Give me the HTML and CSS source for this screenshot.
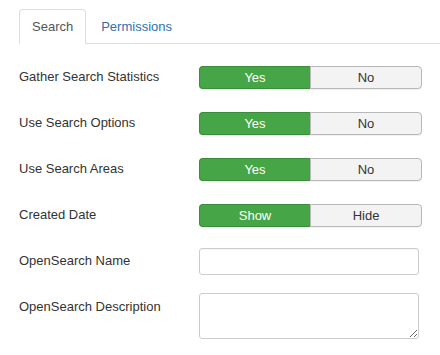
FILE: index.html
```html
<!DOCTYPE html>
<html>
<head>
<meta charset="utf-8">
<link rel="stylesheet" href="styles.css">
</head>
<body>
<div class="page">
  <ul class="tabs">
    <li class="tab active"><a>Search</a></li>
    <li class="tab"><a>Permissions</a></li>
  </ul>
  <div class="form">
    <div class="row">
      <label class="label">Gather Search Statistics</label>
      <div class="toggle"><span class="opt on">Yes</span><span class="opt">No</span></div>
    </div>
    <div class="row">
      <label class="label">Use Search Options</label>
      <div class="toggle"><span class="opt on">Yes</span><span class="opt">No</span></div>
    </div>
    <div class="row">
      <label class="label">Use Search Areas</label>
      <div class="toggle"><span class="opt on">Yes</span><span class="opt">No</span></div>
    </div>
    <div class="row">
      <label class="label">Created Date</label>
      <div class="toggle"><span class="opt on">Show</span><span class="opt">Hide</span></div>
    </div>
    <div class="row">
      <label class="label">OpenSearch Name</label>
      <input class="input" type="text">
    </div>
    <div class="row top">
      <label class="label">OpenSearch Description</label>
      <textarea class="textarea"></textarea>
    </div>
  </div>
</div>
</body>
</html>
```

FILE: styles.css
```css
html, body {
  margin: 0;
  padding: 0;
  background: #fff;
}
body {
  font-family: "Liberation Sans", Arial, sans-serif;
  font-size: 13px;
  color: #333;
}
.page {
  padding-left: 19px;
}
.tabs {
  list-style: none;
  margin: 9px 0 0 0;
  padding: 0;
  display: flex;
  gap: 2px;
  border-bottom: 1px solid #ddd;
}
.tab {
  margin-bottom: -1px;
}
.tab a {
  display: block;
  padding: 8px 12px;
  line-height: 17px;
  border: 1px solid transparent;
  border-radius: 4px 4px 0 0;
  color: #2f6fae;
}
.tab.active a {
  color: #555;
  background: #fff;
  border-color: #ddd;
  border-bottom-color: #fff;
}
.form {
  padding-top: 10px;
}
.row {
  display: flex;
  align-items: center;
  height: 46px;
}
.row.top {
  align-items: flex-start;
  padding-top: 9px;
}
.label {
  width: 180px;
  line-height: 18px;
}
.row.top .label {
  padding-top: 5px;
}
.toggle {
  display: flex;
  width: 223px;
  height: 23px;
}
.opt {
  flex: 1;
  text-align: center;
  line-height: 21px;
  border: 1px solid #b8b8b8;
  background: #f3f3f3;
  color: #333;
  border-radius: 0 4px 4px 0;
  box-shadow: 0 1px 1px rgba(0,0,0,0.06);
}
.opt.on {
  background: #46a546;
  border-color: #3a8d3a;
  color: #fff;
  border-radius: 4px 0 0 4px;
  border-right: none;
}
.input {
  box-sizing: border-box;
  width: 220px;
  height: 27px;
  margin: 0;
  border: 1px solid #ccc;
  border-radius: 3px;
  padding: 4px 6px;
  font: inherit;
  box-shadow: inset 0 1px 1px rgba(0,0,0,0.04);
}
.textarea {
  box-sizing: border-box;
  width: 220px;
  height: 46px;
  margin: 0;
  border: 1px solid #ccc;
  border-radius: 3px;
  padding: 4px 6px;
  font: inherit;
  resize: both;
}
```
